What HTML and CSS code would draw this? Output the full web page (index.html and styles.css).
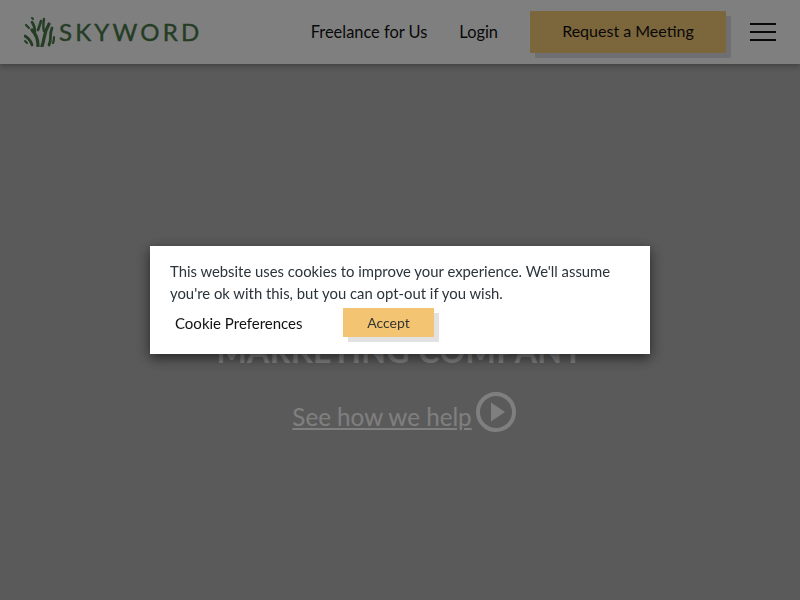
FILE: index.html
```html
<!DOCTYPE html>
<html lang="en">
<head>
    <meta charset="UTF-8">
    <meta name="viewport" content="width=device-width, initial-scale=1.0">
    <title>Skyword</title>
    <link rel="stylesheet" href="styles.css">
</head>
<body>

    <!-- Top Navigation -->
    <header class="site-header">
        <a class="logo" href="#">
            <svg class="logo-mark" width="31" height="30" viewBox="0 0 31 30" fill="none" stroke="#487a48" stroke-linecap="round">
                <path stroke-width="3.2" d="M14 29C14 22 12 17 8 13"/>
                <path stroke-width="2.8" d="M8 28C7 24 4 21 1 19"/>
                <path stroke-width="2" d="M3 26L1 24"/>
                <path stroke-width="2.6" d="M11 15C11 11 10 8 8 5"/>
                <path stroke-width="2.2" d="M5 11L2 8"/>
                <path stroke-width="2" d="M9 2L8 1"/>
                <path stroke-width="2.6" d="M14 13C15 10 16 8 17 4"/>
                <path stroke-width="3.2" d="M18 29C21 22 19 17 25 7"/>
                <path stroke-width="2.4" d="M20 14C19 11 19 8 20 2"/>
                <path stroke-width="2.8" d="M25 28C28 22 25 18 28 11"/>
                <path stroke-width="2.2" d="M29 26C30 24 30 22 30 20"/>
            </svg>
            <span class="logo-text">SKYWORD</span>
        </a>
        <nav class="main-nav">
            <a href="#">Freelance for Us</a>
            <a href="#">Login</a>
        </nav>
        <a class="meeting-btn" href="#">Request a Meeting</a>
        <button class="menu-btn" aria-label="Menu">
            <span></span>
            <span></span>
            <span></span>
        </button>
    </header>

    <!-- Hero -->
    <main class="hero">
        <h1>MARKETING COMPANY</h1>
        <a class="hero-link" href="#">
            <span>See how we help</span>
            <svg width="40" height="40" viewBox="0 0 40 40">
                <circle cx="20" cy="20" r="18" fill="none" stroke="#fff" stroke-width="4"/>
                <path d="M15 10.5L29 20L15 29.5Z" fill="#fff"/>
            </svg>
        </a>
    </main>

    <!-- Cookie Popup -->
    <div class="overlay">
        <div class="cookie-box">
            <p>This website uses cookies to improve your experience. We'll assume you're ok with this, but you can opt-out if you wish.</p>
            <div class="cookie-actions">
                <a class="cookie-prefs" href="#">Cookie Preferences</a>
                <button class="accept-btn">Accept</button>
            </div>
        </div>
    </div>

</body>
</html>
```

FILE: styles.css
```css
body {
    margin: 0;
    background-color: #b4b4b4;
    font-family: "Lato", "Liberation Sans", sans-serif;
    overflow: hidden;
}

a {
    text-decoration: none;
    color: inherit;
}

/* Top Navigation */
.site-header {
    position: relative;
    display: flex;
    align-items: center;
    height: 64px;
    padding: 0 24px;
    background: #fff;
    box-shadow: 0 2px 6px rgba(0, 0, 0, 0.3);
    color: #111;
}

.logo {
    display: flex;
    align-items: center;
    gap: 4px;
    margin-right: auto;
}

.logo-text {
    font-size: 24px;
    letter-spacing: 3.2px;
    line-height: 28px;
    -webkit-text-stroke: 0.4px #487a48;
    color: #487a48;
}

.main-nav {
    display: flex;
    gap: 32px;
    margin-right: 32px;
    margin-bottom: 1px;
    font-size: 16.4px;
}

.meeting-btn {
    width: 196px;
    height: 42px;
    margin-right: 24px;
    line-height: 40px;
    text-align: center;
    font-size: 16px;
    background: #f9cd78;
    border-radius: 1px;
    box-shadow: 5px 5px 0 #dfdfe6;
}

.menu-btn {
    display: flex;
    flex-direction: column;
    gap: 6px;
    width: 26px;
    padding: 0;
    border: none;
    background: none;
}

.menu-btn span {
    height: 2px;
    width: 100%;
    background: #111;
}

/* Hero */
.hero {
    display: flex;
    flex-direction: column;
    align-items: center;
    height: 536px;
    padding-top: 265px;
    box-sizing: border-box;
    color: #fff;
}

.hero h1 {
    margin: 0;
    font-size: 32px;
    line-height: 44px;
    font-weight: 700;
    letter-spacing: 0.4px;
}

.hero-link {
    display: flex;
    align-items: center;
    gap: 4px;
    margin-top: 19px;
    padding-left: 8px;
    font-size: 24.2px;
}

.hero-link span {
    padding-top: 9px;
    text-decoration: underline;
}

/* Cookie Popup */
.overlay {
    position: fixed;
    inset: 0;
    display: flex;
    justify-content: center;
    align-items: center;
    background: rgba(0, 0, 0, 0.5);
}

.cookie-box {
    width: 500px;
    height: 108px;
    padding: 14px 20px 0;
    box-sizing: border-box;
    background: #fff;
    box-shadow: 0 4px 12px rgba(0, 0, 0, 0.6);
}

.cookie-box p {
    margin: 0;
    font-size: 14.85px;
    line-height: 22px;
    color: #2b343a;
}

.cookie-actions {
    display: flex;
    align-items: center;
    margin-top: 4px;
}

.cookie-prefs {
    width: 168px;
    padding-left: 5px;
    font-size: 15px;
    color: #111;
}

.accept-btn {
    width: 91px;
    height: 29px;
    padding: 0;
    border: none;
    font-family: inherit;
    font-size: 14px;
    color: #333;
    background: #f3c573;
    box-shadow: 5px 5px 0 #e2e2e2;
}
```
